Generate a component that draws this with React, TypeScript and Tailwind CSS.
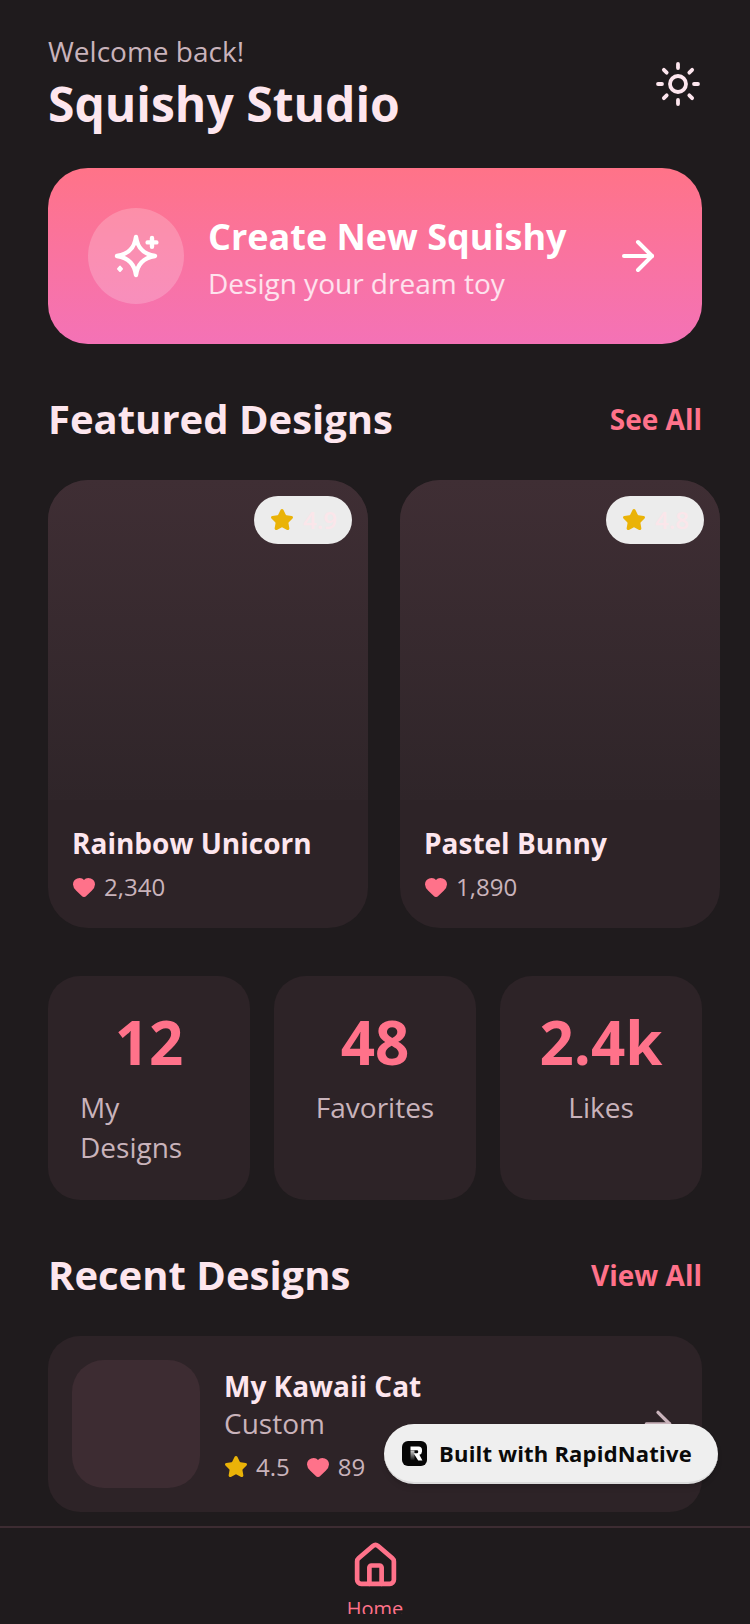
import { ArrowRight, Heart, Home, Star, Sun } from 'lucide-react';

const featured = [
  { name: 'Rainbow Unicorn', likes: '2,340', rating: '4.9' },
  { name: 'Pastel Bunny', likes: '1,890', rating: '4.8' },
];

const stats = [
  { value: '12', label: 'My Designs' },
  { value: '48', label: 'Favorites' },
  { value: '2.4k', label: 'Likes' },
];

function SectionHeader({ title, action }: { title: string; action: string }) {
  return (
    <div className="flex items-center justify-between">
      <h2 className="text-[40px] leading-[52px] font-bold text-[#fde6ee]">{title}</h2>
      <span className="text-[28px] leading-[36px] font-bold text-[#ff728a]">{action}</span>
    </div>
  );
}

function SparkleIcon() {
  return (
    <svg width="48" height="48" viewBox="0 0 24 24" fill="none" stroke="#fff" strokeWidth="2.2" strokeLinecap="round" strokeLinejoin="round">
      <path d="M12 2.5C12.8 8 15.5 11 21.5 12C15.5 13 12.8 16 12 21.5C11.2 16 8.5 13 2.5 12C8.5 11 11.2 8 12 2.5Z" />
      <path d="M20 3v4.4M17.8 5.2h4.4" />
      <path d="M4 17.3l1 1.1-1 1.1-1-1.1z" fill="#fff" strokeWidth="1" />
    </svg>
  );
}

function RapidNativeLogo() {
  return (
    <svg width="25" height="25" viewBox="0 0 25 25" className="shrink-0">
      <defs>
        <linearGradient id="stem" x1="0" y1="0" x2="0" y2="1">
          <stop offset="0" stopColor="#d4d4d4" />
          <stop offset="1" stopColor="#0a0a0a" />
        </linearGradient>
      </defs>
      <rect width="25" height="25" rx="6" fill="#070707" />
      <rect x="8.5" y="9.5" width="4" height="10" fill="url(#stem)" />
      <path d="M8.5 5.5h8a3.5 3.5 0 0 1 3.5 3.5v1.5a3.3 3.3 0 0 1-2.6 3.2l3 5.8h-4.2l-4.6-7.2h3.6a1.2 1.2 0 0 0 1-1.2v-.6a1.2 1.2 0 0 0-1.2-1.2H8.5z" fill="#fff" />
    </svg>
  );
}

export default function App() {
  return (
    <div className="flex h-[1624px] w-[750px] flex-col overflow-hidden bg-[#1f1b1d] pb-[10px] font-['Open_Sans',sans-serif]">
      <main className="relative flex-1 overflow-hidden">
        {/* header */}
        <div className="flex items-center justify-between pt-[31px] pr-[48px] pl-[48px]">
          <div>
            <p className="text-[28px] leading-[40px] text-[#c9b3bb]">Welcome back!</p>
            <h1 className="mt-[1px] text-[48px] leading-[64px] font-bold text-[#fde6ee]">Squishy Studio</h1>
          </div>
          <Sun size={48} strokeWidth={1.9} className="text-[#fde6ee]" />
        </div>

        {/* create card */}
        <div className="mx-[48px] mt-[32px] flex h-[176px] items-center rounded-[40px] bg-gradient-to-b from-[#ff7388] to-[#f472b6] px-[40px]">
          <div className="flex h-[96px] w-[96px] items-center justify-center rounded-full bg-white/20">
            <SparkleIcon />
          </div>
          <div className="ml-[24px] flex-1 pt-[4px]">
            <p className="text-[36px] leading-[48px] font-bold text-white">Create New Squishy</p>
            <p className="mt-[2px] text-[28px] leading-[40px] text-white/80">Design your dream toy</p>
          </div>
          <ArrowRight size={48} className="text-white" />
        </div>

        {/* featured */}
        <div className="mt-[49px] px-[48px]">
          <SectionHeader title="Featured Designs" action="See All" />
        </div>
        <div className="mt-[35px] flex gap-[32px] pl-[48px]">
          {featured.map((item) => (
            <div key={item.name} className="flex h-[448px] w-[320px] shrink-0 flex-col rounded-[40px] bg-[#2d2327]">
              <div className="relative h-[320px] rounded-t-[40px] bg-gradient-to-b from-[#3f2e34] to-[#2f2529]">
                <div className="absolute top-[16px] right-[16px] flex h-[48px] w-[98px] items-center rounded-full bg-[#ececec] pl-[16px]">
                  <Star size={24} className="fill-[#eab308] text-[#eab308]" />
                  <span className="ml-[9px] text-[24px] leading-[32px] font-semibold text-[#fbe6ea]">{item.rating}</span>
                </div>
              </div>
              <div className="px-[24px] pt-[23px]">
                <p className="text-[28px] leading-[40px] font-bold text-[#fde6ee]">{item.name}</p>
                <div className="mt-[8px] flex items-center gap-[8px]">
                  <Heart size={24} className="fill-[#ff728a] text-[#ff728a]" />
                  <span className="text-[24px] leading-[32px] text-[#c9b3bb]">{item.likes}</span>
                </div>
              </div>
            </div>
          ))}
        </div>

        {/* stats */}
        <div className="mt-[48px] flex gap-[24px] px-[48px]">
          {stats.map((stat) => (
            <div key={stat.label} className="flex h-[224px] flex-1 flex-col items-center rounded-[32px] bg-[#2d2327] px-[32px] pt-[30px]">
              <p className="text-[60px] leading-[72px] font-bold text-[#ff728a]">{stat.value}</p>
              <p className="mt-[9px] text-[28px] leading-[40px] text-[#c9b3bb]">{stat.label}</p>
            </div>
          ))}
        </div>

        {/* recent */}
        <div className="mt-[49px] px-[48px]">
          <SectionHeader title="Recent Designs" action="View All" />
          <div className="mt-[35px] flex h-[176px] items-center rounded-[32px] bg-[#2d2327] px-[24px]">
            <div className="h-[128px] w-[128px] rounded-[32px] bg-[#3d2c32]" />
            <div className="ml-[24px] flex-1">
              <p className="text-[28px] leading-[40px] font-bold text-[#fde6ee]">My Kawaii Cat</p>
              <p className="-mt-[3px] text-[28px] leading-[40px] text-[#c9b3bb]">Custom</p>
              <div className="mt-[8px] flex items-center">
                <Star size={24} className="fill-[#eab308] text-[#eab308]" />
                <span className="ml-[8px] text-[24px] leading-[32px] text-[#c9b3bb]">4.5</span>
                <Heart size={24} className="ml-[16px] fill-[#ff728a] text-[#ff728a]" />
                <span className="ml-[8px] text-[24px] leading-[32px] text-[#c9b3bb]">89</span>
              </div>
            </div>
            <ArrowRight size={40} className="text-[#c9b3bb]" />
          </div>
        </div>

        {/* floating badge */}
        <div className="absolute top-[1424px] left-[384px] flex h-[60px] w-[334px] items-center rounded-full border-b-2 border-[#dcdcdc] bg-[#efefef] pl-[18px] shadow-md">
          <RapidNativeLogo />
          <span className="ml-[12px] text-[22px] leading-[30px] font-bold tracking-[0.2px] text-[#0a0a0a]">Built with RapidNative</span>
        </div>
      </main>

      {/* tab bar */}
      <nav className="flex h-[88px] shrink-0 flex-col items-center overflow-hidden border-t-2 border-[#3d2c32] pt-[13px]">
        <Home size={49} strokeWidth={2.3} className="shrink-0 text-[#ff728a]" />
        <span className="mt-[5px] shrink-0 text-[20px] leading-[28px] text-[#ff728a]">Home</span>
      </nav>
    </div>
  );
}
